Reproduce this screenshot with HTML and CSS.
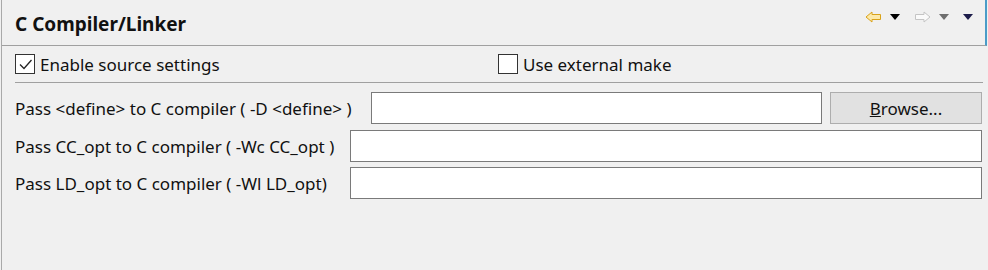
FILE: index.html
```html
<!DOCTYPE html>
<html lang="en">

<head>
    <meta charset="UTF-8">
    <title>C Compiler/Linker</title>
    <link rel="stylesheet" href="styles.css">
</head>

<body>
    <div id="page">
        <div class="header">
            <h1 class="title">C Compiler/Linker</h1>
            <div class="toolbar">
                <svg class="tool" width="17" height="12" viewBox="0 0 17 12">
                    <path d="M1 6 L7 1 L7 3.5 L15.5 3.5 L15.5 8.5 L7 8.5 L7 11 Z" fill="#fde9a8" stroke="#d9a21a" stroke-width="1" stroke-linejoin="round"/>
                </svg>
                <span class="drop dark"></span>
                <svg class="tool" width="17" height="12" viewBox="0 0 17 12">
                    <path d="M16 6 L10 1 L10 3.5 L1.5 3.5 L1.5 8.5 L10 8.5 L10 11 Z" fill="#fafafa" stroke="#c4c4c4" stroke-width="1" stroke-linejoin="round"/>
                </svg>
                <span class="drop gray"></span>
                <span class="drop navy"></span>
            </div>
        </div>

        <div class="options">
            <label class="check">
                <span class="box">
                    <svg width="17" height="17" viewBox="0 0 17 17">
                        <path d="M3 8.5 L7 12.5 L14.5 4" fill="none" stroke="#222" stroke-width="1.3"/>
                    </svg>
                </span>
                Enable source settings
            </label>
            <label class="check">
                <span class="box"></span>
                Use external make
            </label>
        </div>

        <div class="fields">
            <div class="row-define">
                <span class="label">Pass &lt;define&gt; to C compiler ( -D &lt;define&gt; )</span>
                <span class="input"></span>
                <span class="btn"><u>B</u>rowse...</span>
            </div>
            <div class="grid">
                <span class="label">Pass CC_opt to C compiler ( -Wc CC_opt )</span>
                <span class="input"></span>
                <span class="label">Pass LD_opt to C compiler ( -Wl LD_opt)</span>
                <span class="input"></span>
            </div>
        </div>
    </div>
</body>

</html>
```

FILE: styles.css
```css
* {
    margin: 0;
    padding: 0;
    box-sizing: border-box;
}

body {
    background: #f0f0f0;
    font-family: "Noto Sans", "Open Sans", sans-serif;
    font-size: 17px;
    color: #111;
}

#page {
    height: 270px;
    margin-left: 1px;
    border-left: 1px solid #a9a9a9;
}

.header {
    height: 46px;
    display: flex;
    justify-content: space-between;
    align-items: flex-start;
    border-bottom: 1px solid #a0a0a0;
    border-right: 2px solid #4a9cc8;
    margin-right: 1px;
}

.title {
    font-size: 19px;
    font-weight: bold;
    margin: 11px 0 0 13px;
}

.toolbar {
    display: flex;
    align-items: center;
    gap: 8px;
    margin: 11px 12px 0 0;
}

.drop {
    width: 0;
    height: 0;
    border-left: 5px solid transparent;
    border-right: 5px solid transparent;
    border-top: 6px solid #000;
    margin-right: 6px;
}

.drop.gray {
    border-top-color: #6e6e6e;
}

.drop.navy {
    border-top-color: #1c1c4a;
    margin-right: 0;
}

.options {
    height: 37px;
    margin: 0 5px 0 13px;
    display: flex;
    align-items: center;
    border-bottom: 1px solid #a0a0a0;
}

.check {
    display: flex;
    align-items: center;
    gap: 5px;
    width: 483px;
}

.box {
    width: 20px;
    height: 20px;
    border: 1px solid #333;
    background: #fff;
    display: flex;
    align-items: center;
    justify-content: center;
}

.fields {
    padding: 9px 6px 0 13px;
}

.row-define {
    display: flex;
    align-items: center;
    gap: 8px;
    height: 32px;
}

.row-define .label {
    width: 348px;
    white-space: nowrap;
}

.row-define .input {
    flex: 1;
}

.grid {
    display: grid;
    grid-template-columns: 327px 1fr;
    column-gap: 8px;
    row-gap: 5px;
    margin-top: 6px;
    align-items: center;
}

.label {
    white-space: nowrap;
}

.input {
    height: 32px;
    background: #fff;
    border: 1px solid #7a7a7a;
}

.btn {
    width: 152px;
    height: 32px;
    background: #e1e1e1;
    border: 1px solid #adadad;
    display: flex;
    align-items: center;
    justify-content: center;
}
```
